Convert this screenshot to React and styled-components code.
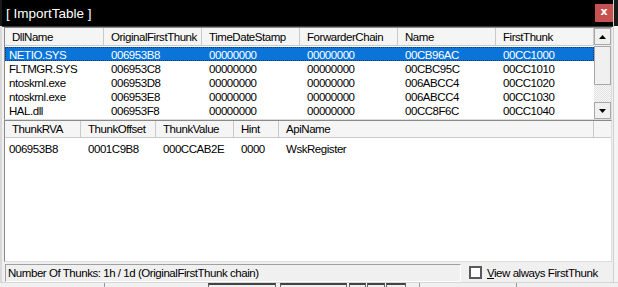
import React from "react";
import styled, { createGlobalStyle } from "styled-components";

const Global = createGlobalStyle`
  * { box-sizing: border-box; }
  html, body { margin: 0; padding: 0; }
  body {
    width: 618px; height: 287px; overflow: hidden;
    background: #e9e9e9;
    font-family: "Liberation Sans", Arial, sans-serif;
  }
`;

const FONT = `
  font-family: "Liberation Sans", Arial, sans-serif;
  font-size: 11.5px;
  letter-spacing: -0.45px;
`;

const Page = styled.div`
  width: 618px;
  height: 287px;
  display: flex;
  flex-direction: column;
  background: #ececec;
`;

const TopArea = styled.div`
  display: flex;
  height: 282px;
`;

const LeftEdge = styled.div`
  width: 2px;
  background: linear-gradient(#1a1a1a 0 26px, #d9d9d9 26px);
`;

const RightEdge = styled.div`
  width: 5px;
  background: linear-gradient(#1a1a1a 0 26px, #f4f4f4 26px);
  border-left: 1px solid #d0d0d0;
`;

const Window = styled.div`
  width: 611px;
  display: flex;
  flex-direction: column;
  background: #f0f0f0;
`;

const TitleBar = styled.div`
  height: 27px;
  background: #000;
  display: flex;
  align-items: flex-start;
  justify-content: space-between;
  padding: 0 0 0 4px;
  border-bottom: 1px solid #3a3a3a;
`;

const Title = styled.div`
  color: #fff;
  font-size: 13.5px;
  line-height: 27px;
  font-family: "Liberation Sans", Arial, sans-serif;
`;

const CloseButton = styled.div`
  width: 18px;
  height: 18px;
  margin-top: 4px;
  background: #c75050;
  color: #fff;
  font-weight: bold;
  font-size: 11px;
  line-height: 16px;
  text-align: center;
  font-family: "DejaVu Sans", sans-serif;
`;

const Body = styled.div`
  flex: 1;
  display: flex;
  flex-direction: column;
  padding: 0 1px 0 2px;
`;

const ListBox = styled.div`
  display: flex;
  height: ${(p) => p.$h}px;
  flex: ${(p) => (p.$grow ? 1 : "none")};
  background: #fff;
  border: 1px solid;
  border-color: #8a8a8a #dcdcdc #dcdcdc #8a8a8a;
`;

const ListMain = styled.div`
  flex: 1;
  display: flex;
  flex-direction: column;
  min-width: 0;
`;

const HeaderRow = styled.div`
  display: flex;
  height: ${(p) => p.$h}px;
  background: #f5f5f5;
  border-bottom: 1px solid #c9c9c9;
`;

const HeaderCell = styled.div`
  ${FONT}
  width: ${(p) => p.$w}px;
  flex: none;
  padding-left: 7px;
  line-height: ${(p) => p.$lh}px;
  color: #000;
  border-right: 1px solid #c9c9c9;
  white-space: nowrap;
  overflow: hidden;
`;

const Row = styled.div`
  display: flex;
  height: 14px;
  margin-top: ${(p) => p.$mt || 0}px;
  background: ${(p) => (p.$sel ? "#0a74d8" : "transparent")};
  color: ${(p) => (p.$sel ? "#fff" : "#000")};
  outline: ${(p) => (p.$sel ? "1px dotted #123a70" : "none")};
  outline-offset: -1px;
`;

const Cell = styled.div`
  ${FONT}
  width: ${(p) => p.$w}px;
  flex: none;
  padding-left: ${(p) => p.$pad ?? 7}px;
  line-height: 16px;
  white-space: nowrap;
  overflow: hidden;
`;

const ScrollBar = styled.div`
  width: 17px;
  display: flex;
  flex-direction: column;
  background-color: #ededed;
  background-image: repeating-conic-gradient(#f7f7f7 0 25%, #e2e2e2 0 50%);
  background-size: 2px 2px;
`;

const ScrollButton = styled.div`
  height: 17px;
  background: #f0f0f0;
  border: 1px solid #a8a8a8;
  display: flex;
  align-items: center;
  justify-content: center;
`;

const Thumb = styled.div`
  height: 39px;
  margin-top: 1px;
  background: #f0f0f0;
  border: 1px solid #a8a8a8;
`;

const Track = styled.div`
  flex: 1;
`;

const HeaderFiller = styled.div`
  width: 17px;
  background: #f5f5f5;
  border-bottom: 1px solid #c9c9c9;
  height: ${(p) => p.$h}px;
`;

const SideColumn = styled.div`
  width: 17px;
  display: flex;
  flex-direction: column;
`;

const StatusRow = styled.div`
  height: 20px;
  display: flex;
  align-items: center;
  padding: 1px 0 0 1px;
`;

const StatusPanel = styled.div`
  ${FONT}
  width: 456px;
  height: 18px;
  border: 1px solid;
  border-color: #a0a0a0 #ffffff #ffffff #a0a0a0;
  line-height: 16px;
  padding-left: 2px;
  color: #000;
`;

const CheckLabel = styled.label`
  ${FONT}
  display: flex;
  align-items: center;
  margin-left: 8px;
  color: #000;
`;

const CheckBox = styled.span`
  width: 13px;
  height: 13px;
  border: 2px solid #5a5a5a;
  background: #fff;
  margin-right: 5px;
`;

const Underline = styled.span`
  text-decoration: underline;
`;

const Backdrop = styled.div`
  height: 5px;
  display: flex;
  background: #f0f0f0;
  border-top: 1px solid #d6d6d6;
`;

const BackPiece = styled.div`
  width: ${(p) => p.$w}px;
  margin-left: ${(p) => p.$ml}px;
  border-top: ${(p) => (p.$box ? "2px solid #444" : "none")};
  border-left: 1px solid ${(p) => (p.$box ? "#666" : "#999")};
  border-right: ${(p) => (p.$box ? "1px solid #666" : "none")};
`;

const Arrow = ({ up }) => (
  <svg width="7" height="4" viewBox="0 0 7 4">
    <path d={up ? "M0 4 L3.5 0 L7 4 Z" : "M0 0 L3.5 4 L7 0 Z"} fill="#000" />
  </svg>
);

const topCols = [
  { name: "DllName", w: 99 },
  { name: "OriginalFirstThunk", w: 98 },
  { name: "TimeDateStamp", w: 98 },
  { name: "ForwarderChain", w: 98 },
  { name: "Name", w: 98 },
  { name: "FirstThunk", w: 98 },
];

const topRows = [
  ["NETIO.SYS", "006953B8", "00000000", "00000000", "00CB96AC", "00CC1000"],
  ["FLTMGR.SYS", "006953C8", "00000000", "00000000", "00CBC95C", "00CC1010"],
  ["ntoskrnl.exe", "006953D8", "00000000", "00000000", "006ABCC4", "00CC1020"],
  ["ntoskrnl.exe", "006953E8", "00000000", "00000000", "006ABCC4", "00CC1030"],
  ["HAL.dll", "006953F8", "00000000", "00000000", "00CC8F6C", "00CC1040"],
];

const bottomCols = [
  { name: "ThunkRVA", w: 76 },
  { name: "ThunkOffset", w: 75 },
  { name: "ThunkValue", w: 78 },
  { name: "Hint", w: 45 },
  { name: "ApiName", w: 315 },
];

const bottomRow = ["006953B8", "0001C9B8", "000CCAB2E", "0000", "WskRegister"];

export default function App() {
  return (
    <>
      <Global />
      <Page>
        <TopArea>
          <LeftEdge />
          <Window>
            <TitleBar>
              <Title>[ ImportTable ]</Title>
              <CloseButton>x</CloseButton>
            </TitleBar>
            <Body>
              <ListBox $h={93}>
                <ListMain>
                  <HeaderRow $h={18}>
                    {topCols.map((c) => (
                      <HeaderCell key={c.name} $w={c.w} $lh={18}>
                        {c.name}
                      </HeaderCell>
                    ))}
                  </HeaderRow>
                  {topRows.map((r, i) => (
                    <Row key={i} $sel={i === 0} $mt={i === 0 ? 1 : 0}>
                      {r.map((v, j) => (
                        <Cell key={j} $w={topCols[j].w} $pad={j === 0 ? 4 : 7}>
                          {v}
                        </Cell>
                      ))}
                    </Row>
                  ))}
                </ListMain>
                <ScrollBar>
                  <ScrollButton>
                    <Arrow up />
                  </ScrollButton>
                  <Thumb />
                  <Track />
                  <ScrollButton>
                    <Arrow />
                  </ScrollButton>
                </ScrollBar>
              </ListBox>
              <ListBox $grow>
                <ListMain>
                  <HeaderRow $h={17}>
                    {bottomCols.map((c) => (
                      <HeaderCell key={c.name} $w={c.w} $lh={17}>
                        {c.name}
                      </HeaderCell>
                    ))}
                  </HeaderRow>
                  <Row $mt={3}>
                    {bottomRow.map((v, j) => (
                      <Cell key={j} $w={bottomCols[j].w} $pad={j === 0 ? 4 : 7}>
                        {v}
                      </Cell>
                    ))}
                  </Row>
                </ListMain>
                <SideColumn>
                  <HeaderFiller $h={17} />
                </SideColumn>
              </ListBox>
              <StatusRow>
                <StatusPanel>Number Of Thunks: 1h / 1d (OriginalFirstThunk chain)</StatusPanel>
                <CheckLabel>
                  <CheckBox />
                  <span>
                    <Underline>V</Underline>iew always FirstThunk
                  </span>
                </CheckLabel>
              </StatusRow>
            </Body>
          </Window>
          <RightEdge />
        </TopArea>
        <Backdrop>
          <BackPiece $ml={104} $w={6} />
          <BackPiece $ml={98} $w={68} $box />
          <BackPiece $ml={4} $w={67} $box />
          <BackPiece $ml={2} $w={17} $box />
          <BackPiece $ml={1} $w={18} $box />
          <BackPiece $ml={1} $w={20} $box />
          <BackPiece $ml={13} $w={97} />
          <BackPiece $ml={0} $w={10} />
        </Backdrop>
      </Page>
    </>
  );
}
